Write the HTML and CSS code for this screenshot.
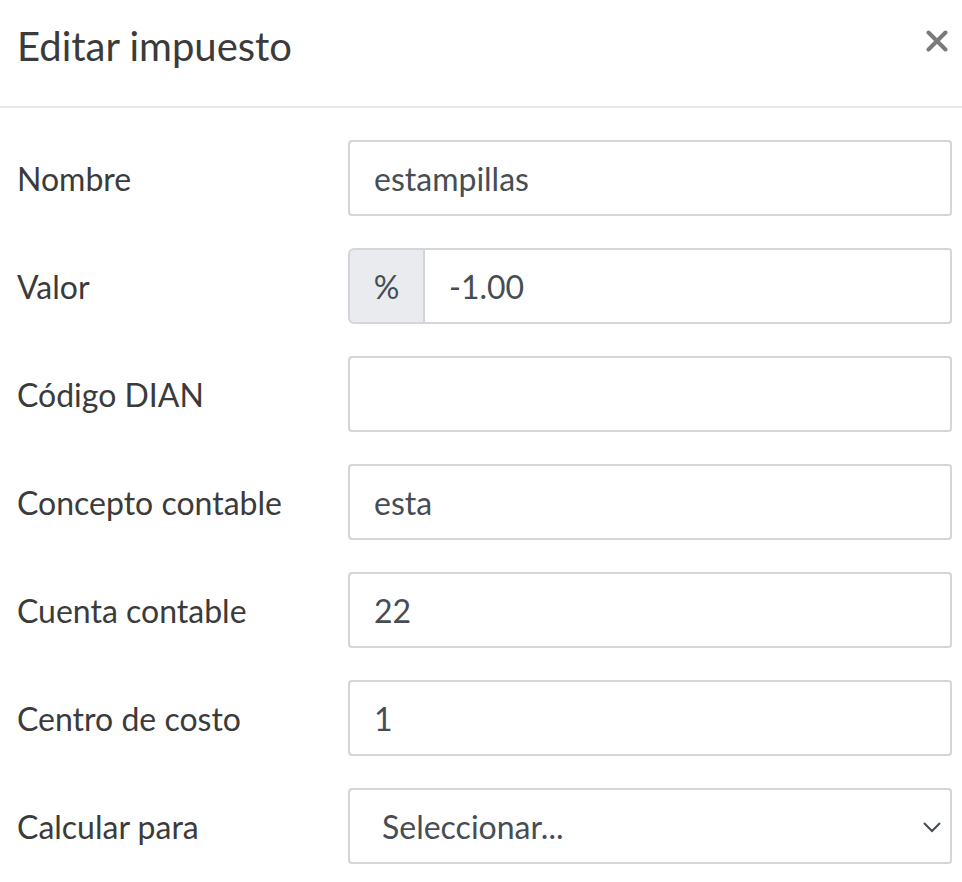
FILE: index.html
```html
<!DOCTYPE html>
<html lang="es">
<head>
<meta charset="utf-8">
<title>Editar impuesto</title>
<link rel="stylesheet" href="styles.css">
</head>
<body>
<div class="modal">
  <div class="modal-header">
    <h1 class="modal-title">Editar impuesto</h1>
    <button class="close" type="button" aria-label="Cerrar">
      <svg width="22" height="22" viewBox="0 0 22 22"><path d="M2.5 2.5 L19.5 19.5 M19.5 2.5 L2.5 19.5" stroke="#7a7a7a" stroke-width="4" stroke-linecap="round"/></svg>
    </button>
  </div>
  <form class="modal-body">
    <div class="row">
      <label class="label">Nombre</label>
      <div class="input">estampillas</div>
    </div>
    <div class="row">
      <label class="label">Valor</label>
      <div class="group">
        <span class="addon">%</span>
        <div class="input group-input">-1.00</div>
      </div>
    </div>
    <div class="row">
      <label class="label">Código DIAN</label>
      <div class="input"></div>
    </div>
    <div class="row">
      <label class="label">Concepto contable</label>
      <div class="input">esta</div>
    </div>
    <div class="row">
      <label class="label">Cuenta contable</label>
      <div class="input">22</div>
    </div>
    <div class="row">
      <label class="label">Centro de costo</label>
      <div class="input">1</div>
    </div>
    <div class="row">
      <label class="label">Calcular para</label>
      <div class="input select">
        <span>Seleccionar...</span>
        <svg class="chev" width="20" height="12" viewBox="0 0 20 12"><path d="M2 2 L10 10 L18 2" fill="none" stroke="#444a52" stroke-width="2"/></svg>
      </div>
    </div>
  </form>
</div>
</body>
</html>
```
FILE: styles.css
```css
* { box-sizing: border-box; }
html, body { margin: 0; padding: 0; background: #fff; }
body {
  font-family: Lato, "Open Sans", sans-serif;
  color: #3d3d3d;
}
.modal { width: 962px; }
.modal-header {
  height: 108px;
  display: flex;
  align-items: flex-start;
  justify-content: space-between;
  padding: 0 11px 0 17px;
  border-bottom: 2px solid #e9e9ef;
}
.modal-title {
  margin: 22px 0 0 0;
  font-size: 40px;
  font-weight: 400;
  line-height: 48px;
  color: #3b3b3b;
}
.close {
  border: 0;
  background: none;
  padding: 0;
  margin: 30px 3px 0 0;
  width: 22px;
  height: 22px;
  display: flex;
}
.modal-body {
  padding: 32px 10px 0 17px;
  display: flex;
  flex-direction: column;
  gap: 32px;
}
.row {
  display: flex;
  align-items: center;
  height: 76px;
}
.label {
  width: 331px;
  font-size: 32px;
  color: #3b3b3b;
}
.input {
  flex: 1;
  height: 76px;
  border: 2px solid #d2d6da;
  border-radius: 4px;
  padding: 0 24px;
  display: flex;
  align-items: center;
  font-size: 32px;
  color: #464d55;
}
.group {
  flex: 1;
  display: flex;
  height: 76px;
}
.addon {
  width: 77px;
  border: 2px solid #d2d6da;
  border-radius: 6px 0 0 6px;
  background: #e9ebee;
  display: flex;
  align-items: center;
  justify-content: center;
  font-size: 32px;
  color: #464d55;
}
.group-input {
  border-left: 0;
  border-radius: 0 4px 4px 0;
}
.select {
  justify-content: space-between;
  padding: 0 8px 0 32px;
}
.chev { margin-top: 2px; }
```
